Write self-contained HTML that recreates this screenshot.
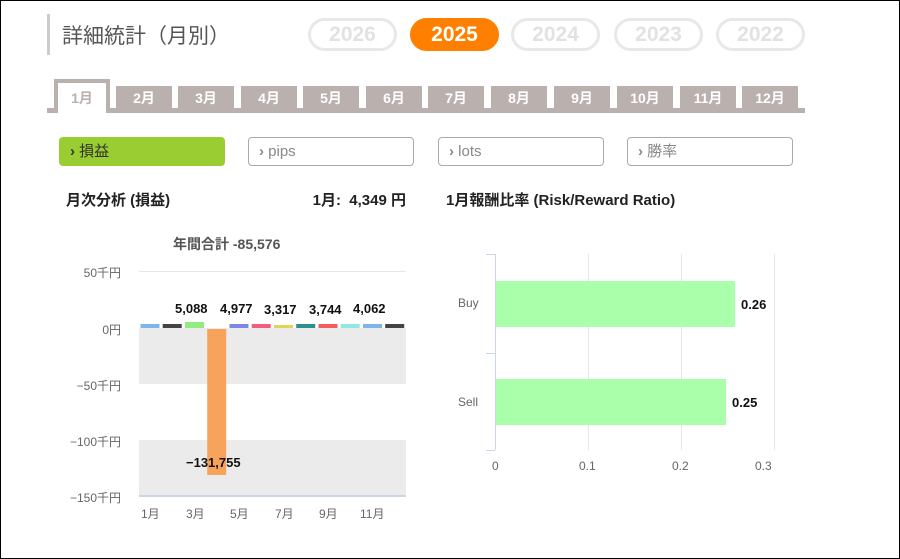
<!DOCTYPE html>
<html><head><meta charset="utf-8"><style>
*{margin:0;padding:0;box-sizing:border-box}
body{width:900px;height:559px;background:#fff;font-family:"Liberation Sans","Noto Sans CJK JP",sans-serif;position:relative;overflow:hidden;border:1px solid #000}
.a{position:absolute;white-space:nowrap}
.pill{position:absolute;top:17px;width:89px;height:33px;border:3px solid #e8e8e8;border-radius:17px;color:#e2e2e2;font-weight:bold;font-size:21px;text-align:center;line-height:27px}
.tab{position:absolute;top:85px;width:56px;height:25px;background:#bab0ae;color:#fff;font-weight:bold;font-size:14px;text-align:center;line-height:25px}
.btn{position:absolute;top:136px;height:29px;border:1px solid #aaa;border-radius:4px;font-size:15px;line-height:27px;padding-left:10px;color:#888}
.h{font-weight:bold;font-size:15px;color:#222}
.yl{position:absolute;font-size:12px;color:#666;text-align:right}
.xl{position:absolute;top:504px;font-size:12px;color:#666}
.v{position:absolute;font-size:13px;font-weight:bold;color:#111}
</style></head><body>
<div class="a" style="left:46px;top:13px;width:3px;height:41px;background:#ccc"></div>
<div class="a" style="left:61px;top:19px;font-size:21px;color:#555">詳細統計（月別）</div>
<div class="pill" style="left:307px">2026</div>
<div class="pill" style="left:409px;background:#ff8000;border-color:#ff8000;color:#fff">2025</div>
<div class="pill" style="left:510px">2024</div>
<div class="pill" style="left:613px">2023</div>
<div class="pill" style="left:715px">2022</div>

<div class="a" style="left:46px;top:107px;width:758px;height:5px;background:#bab0ae"></div>
<div class="a" style="left:53px;top:78px;width:56px;height:34px;background:#bab0ae"></div>
<div class="a" style="left:57px;top:82px;width:48px;height:30px;background:#fff;color:#bab0ae;font-weight:bold;font-size:14px;text-align:center;line-height:30px">1月</div>
<div class="tab" style="left:115px">2月</div>
<div class="tab" style="left:177px">3月</div>
<div class="tab" style="left:240px">4月</div>
<div class="tab" style="left:302px">5月</div>
<div class="tab" style="left:365px">6月</div>
<div class="tab" style="left:427px">7月</div>
<div class="tab" style="left:490px">8月</div>
<div class="tab" style="left:553px">9月</div>
<div class="tab" style="left:616px">10月</div>
<div class="tab" style="left:679px">11月</div>
<div class="tab" style="left:741px">12月</div>

<div class="btn" style="left:58px;width:166px;background:#9acd32;border-color:#9acd32;color:#333"><b>›</b> 損益</div>
<div class="btn" style="left:247px;width:166px"><b>›</b> pips</div>
<div class="btn" style="left:437px;width:166px"><b>›</b> lots</div>
<div class="btn" style="left:626px;width:166px"><b>›</b> 勝率</div>

<div class="a h" style="left:65px;top:188px">月次分析 (損益)</div>
<div class="a h" style="left:300px;top:188px;width:105px;text-align:right">1月:&nbsp; 4,349 円</div>
<div class="a h" style="left:445px;top:188px">1月報酬比率 (Risk/Reward Ratio)</div>
<div class="a" style="left:172px;top:233px;font-size:14px;font-weight:bold;color:#555">年間合計 -85,576</div>

<!-- left chart -->
<div class="a" style="left:138px;top:270px;width:267px;height:1px;background:#e6e6e6"></div>
<div class="a" style="left:138px;top:327px;width:267px;height:56px;background:#ebebeb"></div>
<div class="a" style="left:138px;top:439px;width:267px;height:56px;background:#ebebeb"></div>
<div class="a" style="left:138px;top:494px;width:267px;height:2px;background:#ccd6eb"></div>
<div class="yl" style="top:263px;right:778px">50千円</div>
<div class="yl" style="top:320px;right:778px">0円</div>
<div class="yl" style="top:376px;right:778px">−50千円</div>
<div class="yl" style="top:432px;right:778px">−100千円</div>
<div class="yl" style="top:488px;right:778px">−150千円</div>
<svg class="a" style="left:138px;top:300px" width="267" height="180">
<rect x="1.5" y="23" width="19" height="4" fill="#7cb5ec"/>
<rect x="23.7" y="23" width="19" height="4" fill="#434348"/>
<rect x="46" y="21" width="19" height="6" fill="#90ed7d"/>
<rect x="68.2" y="28" width="19" height="146" fill="#f7a35c"/>
<rect x="90.5" y="23" width="19" height="4" fill="#8085e9"/>
<rect x="112.7" y="23" width="19" height="4" fill="#f15c80"/>
<rect x="135" y="24" width="19" height="3" fill="#e4d354"/>
<rect x="157.2" y="23" width="19" height="4" fill="#2b908f"/>
<rect x="179.5" y="23" width="19" height="4" fill="#f45b5b"/>
<rect x="201.7" y="23" width="19" height="4" fill="#91e8e1"/>
<rect x="224" y="23" width="19" height="4" fill="#7cb5ec"/>
<rect x="246.2" y="23" width="19" height="4" fill="#434348"/>
</svg>
<div class="v" style="left:174px;top:300px">5,088</div>
<div class="v" style="left:219px;top:300px">4,977</div>
<div class="v" style="left:263px;top:301px">3,317</div>
<div class="v" style="left:308px;top:301px">3,744</div>
<div class="v" style="left:352px;top:300px">4,062</div>
<div class="v" style="left:185px;top:454px">−131,755</div>
<div class="xl" style="left:140px">1月</div>
<div class="xl" style="left:185px">3月</div>
<div class="xl" style="left:229px">5月</div>
<div class="xl" style="left:274px">7月</div>
<div class="xl" style="left:318px">9月</div>
<div class="xl" style="left:359px">11月</div>

<!-- right chart -->
<div class="a" style="left:587px;top:253px;width:1px;height:196px;background:#e6e6e6"></div>
<div class="a" style="left:680px;top:253px;width:1px;height:196px;background:#e6e6e6"></div>
<div class="a" style="left:773px;top:253px;width:1px;height:196px;background:#e6e6e6"></div>
<div class="a" style="left:494px;top:253px;width:1px;height:196px;background:#ccd6eb"></div>
<div class="a" style="left:485px;top:253px;width:9px;height:1px;background:#ccd6eb"></div>
<div class="a" style="left:485px;top:352px;width:9px;height:1px;background:#ccd6eb"></div>
<div class="a" style="left:485px;top:449px;width:9px;height:1px;background:#ccd6eb"></div>
<div class="a" style="left:495px;top:280px;width:239px;height:46px;background:#aaffaa"></div>
<div class="a" style="left:495px;top:378px;width:230px;height:46px;background:#aaffaa"></div>
<div class="a" style="left:457px;top:295px;font-size:12px;color:#666">Buy</div>
<div class="a" style="left:457px;top:394px;font-size:12px;color:#666">Sell</div>
<div class="v" style="left:740px;top:296px">0.26</div>
<div class="v" style="left:731px;top:394px">0.25</div>
<div class="a" style="left:491px;top:458px;font-size:12px;color:#666">0</div>
<div class="a" style="left:578px;top:458px;font-size:12px;color:#666">0.1</div>
<div class="a" style="left:671px;top:458px;font-size:12px;color:#666">0.2</div>
<div class="a" style="left:754px;top:458px;font-size:12px;color:#666">0.3</div>
</body></html>
